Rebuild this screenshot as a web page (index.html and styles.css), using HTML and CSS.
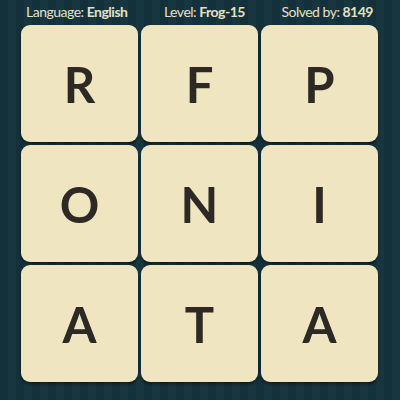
FILE: index.html
```html
<!DOCTYPE html>
<html>
<head>
<meta charset="utf-8">
<link rel="stylesheet" href="styles.css">
</head>
<body>
<div class="page">
  <div class="header">
    <div class="info">Language: <b>English</b></div>
    <div class="info">Level: <b>Frog-15</b></div>
    <div class="info">Solved by: <b>8149</b></div>
  </div>
  <div class="grid">
    <div class="tile">R</div>
    <div class="tile">F</div>
    <div class="tile">P</div>
    <div class="tile">O</div>
    <div class="tile">N</div>
    <div class="tile">I</div>
    <div class="tile">A</div>
    <div class="tile">T</div>
    <div class="tile">A</div>
  </div>
</div>
</body>
</html>
```
FILE: styles.css
```css
html, body {
  margin: 0;
  padding: 0;
}
body {
  width: 400px;
  height: 400px;
  overflow: hidden;
  background-color: #14303a;
  background-image: repeating-linear-gradient(90deg, #14303a 0px, #14303a 8px, #183640 8px, #183640 16px);
  font-family: "Lato", "Noto Sans", sans-serif;
}
.page {
  width: 400px;
  height: 400px;
  box-sizing: border-box;
}
.header {
  height: 25px;
  display: flex;
  align-items: center;
  justify-content: space-between;
  padding: 0 27px 2px 26px;
  box-sizing: border-box;
  color: #e6e0c4;
  font-size: 14px;
  letter-spacing: -0.5px;
}
.header b {
  font-weight: 700;
}
.grid {
  margin-left: 21px;
  display: grid;
  grid-template-columns: repeat(3, 117px);
  grid-template-rows: repeat(3, 117px);
  gap: 3px;
}
.tile {
  background: #efe6c1;
  border-radius: 9px;
  box-shadow: 0 2px 3px rgba(0, 0, 0, 0.45);
  display: flex;
  align-items: center;
  justify-content: center;
  color: #2d2924;
  font-size: 49px;
  font-weight: 700;
  padding-top: 1px;
  box-sizing: border-box;
}
```
